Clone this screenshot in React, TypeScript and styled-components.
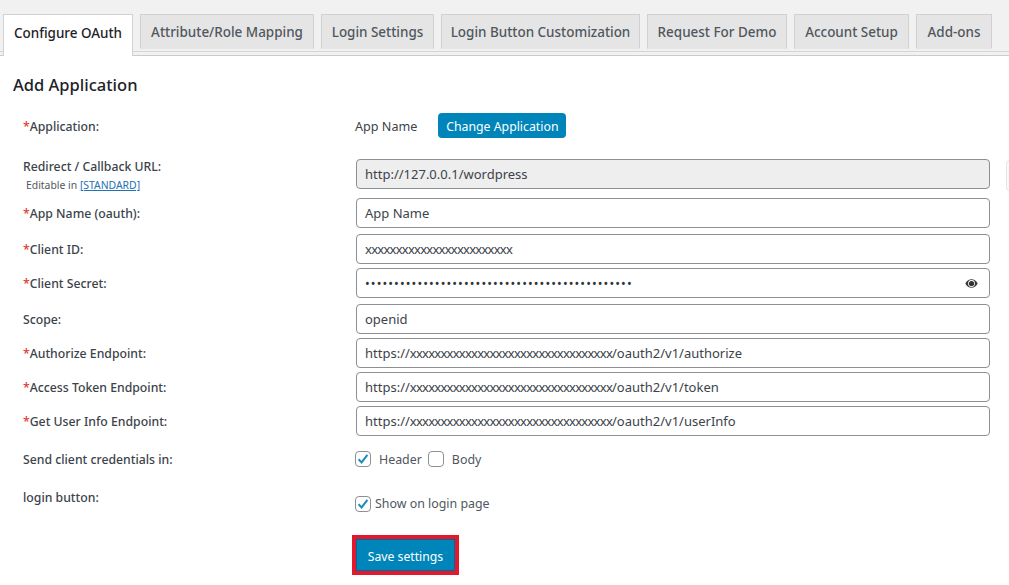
import React from "react";
import styled, { createGlobalStyle } from "styled-components";

const Global = createGlobalStyle`
  html, body { margin: 0; padding: 0; background: #fff; overflow: hidden; }
  body { font-family: "Noto Sans", "Open Sans", sans-serif; color: #3c434a; }
`;
const Page = styled.div`
  width: 1009px;
  height: 585px;
  overflow: hidden;
  position: relative;
`;
const TabBar = styled.nav`
  height: 56px;
  box-sizing: border-box;
  padding: 14px 0 0 3px;
  background: #f1f1f1;
  border-bottom: 1px solid #c9cbcd;
  display: flex;
  align-items: flex-start;
  gap: 7px;
  position: relative;
  &::after {
    content: "";
    position: absolute;
    left: 0;
    right: 0;
    top: 51px;
    height: 1px;
    background: #d4d5d6;
  }
`;
const Tab = styled.a<{ $active?: boolean; $w: number }>`
  width: ${(p) => p.$w}px;
  height: ${(p) => (p.$active ? 42 : 35)}px;
  box-sizing: border-box;
  display: flex;
  align-items: center;
  justify-content: center;
  padding-bottom: ${(p) => (p.$active ? 6 : 0)}px;
  font-size: 13.45px;
  font-weight: 500;
  white-space: nowrap;
  color: ${(p) => (p.$active ? "#1d2327" : "#50575e")};
  background: ${(p) => (p.$active ? "#fff" : "#e5e5e5")};
  border: 1px solid #d0d1d2;
  border-bottom: ${(p) => (p.$active ? "none" : "1px solid #e5e5e5")};
  position: relative;
  z-index: 1;
`;
const Title = styled.h2`
  margin: 0;
  padding: 17px 0 0 13px;
  height: 41px;
  box-sizing: border-box;
  font-size: 16.5px;
  line-height: 24px;
  font-weight: 500;
  color: #1d2327;
`;
const Form = styled.div`
  padding: 0 19px 0 23px;
  display: flex;
  flex-direction: column;
`;
const Row = styled.div<{ $top: number; $h?: number; $start?: boolean }>`
  display: flex;
  align-items: ${(p) => (p.$start ? "flex-start" : "center")};
  margin-top: ${(p) => p.$top}px;
  height: ${(p) => p.$h ?? 30}px;
`;
const LabelCol = styled.div`
  width: 333px;
  flex: none;
`;
const Label = styled.div<{ $lift?: number }>`
  font-size: 12.25px;
  line-height: 16px;
  padding-top: 2px;
  margin-top: ${(p) => -(p.$lift ?? 0)}px;
  font-weight: 500;
  color: #3c434a;
`;
const Star = styled.span`
  color: #e2352f;
`;
const Hint = styled.div`
  font-size: 10.4px;
  line-height: 13px;
  margin: 4px 0 0 3px;
  color: #50575e;
`;
const HintLink = styled.a`
  color: #2271b1;
  text-decoration: underline;
`;
const Field = styled.div<{ $disabled?: boolean }>`
  flex: 1;
  height: 30px;
  box-sizing: border-box;
  border: 1px solid #8c8f94;
  border-radius: 4px;
  background: ${(p) => (p.$disabled ? "#eeeeee" : "#fff")};
  padding: 0 11px 0 8px;
  display: flex;
  align-items: center;
  justify-content: space-between;
  font-size: 13px;
  color: #3c434a;
  white-space: nowrap;
`;
const Xs = styled.span`
  letter-spacing: -0.75px;
`;
const Dots = styled.span`
  font-size: 12.5px;
  letter-spacing: 1.12px;
  color: #2c3338;
`;
const AppName = styled.span`
  font-size: 12.6px;
  margin-left: -1px;
  margin-right: 21px;
`;
const Change = styled.button`
  height: 25px;
  width: 128px;
  margin-bottom: 1px;
  padding: 2px 0 0;
  border: none;
  border-radius: 4px;
  background: #0085ba;
  color: #fff;
  font: 12.3px "Noto Sans", sans-serif;
`;
const Box = styled.span`
  width: 16px;
  height: 16px;
  flex: none;
  box-sizing: border-box;
  border: 1px solid #8c8f94;
  border-radius: 4px;
  background: #fff;
  display: inline-flex;
  align-items: center;
  justify-content: center;
`;
const Options = styled.div<{ $top?: number }>`
  display: flex;
  align-items: center;
  margin: ${(p) => p.$top ?? 0}px 0 0 -1px;
  font-size: 12.4px;
  color: #50575e;
`;
const OptionText = styled.span<{ $ml: number; $mr?: number }>`
  margin-left: ${(p) => p.$ml}px;
  margin-right: ${(p) => p.$mr ?? 0}px;
`;
const SaveOutline = styled.div`
  margin: 11px 0 0 329px;
  width: 107px;
  height: 40px;
  box-sizing: border-box;
  border: 4px solid #e2192c;
  display: flex;
`;
const Save = styled.button`
  flex: 1;
  border: 1px solid #006799;
  background: #0085ba;
  color: #fff;
  padding: 2px 0 0;
  font: 12.2px "Noto Sans", sans-serif;
`;
const Edge = styled.div`
  position: absolute;
  left: 1006px;
  top: 160px;
  width: 6px;
  height: 29px;
  border: 1px solid #e6e6e6;
  border-radius: 3px;
  background: #fafafa;
`;

const Check = () => (
  <svg width="14" height="14" viewBox="0 0 14 14">
    <path d="M2.6 7.2 L5.6 10.4 L11.4 2.8" fill="none" stroke="#1e8cbe" strokeWidth="2" />
  </svg>
);
const Eye = () => (
  <svg width="13" height="9" viewBox="0 0 13 9">
    <path d="M0.3 4.5C2 1.6 4 .3 6.5 .3s4.5 1.3 6.2 4.2C11 7.4 9 8.7 6.5 8.7S2 7.4.3 4.5z" fill="#3a3a3a" />
    <circle cx="6.5" cy="4.5" r="3.4" fill="#fff" />
    <circle cx="6.5" cy="4.5" r="2.6" fill="#333" />
  </svg>
);

const tabs: [string, number][] = [
  ["Attribute/Role Mapping", 174],
  ["Login Settings", 113],
  ["Login Button Customization", 199],
  ["Request For Demo", 140],
  ["Account Setup", 115],
  ["Add-ons", 76],
];
const X = "x".repeat(33);

const Req = ({ children }: { children: React.ReactNode }) => (
  <Label>
    <Star>*</Star>
    {children}
  </Label>
);

export default function App() {
  return (
    <Page>
      <Global />
      <TabBar>
        <Tab $active $w={130}>Configure OAuth</Tab>
        {tabs.map(([t, w]) => (
          <Tab key={t} $w={w}>{t}</Tab>
        ))}
      </TabBar>
      <Title>Add Application</Title>
      <Form>
        <Row $top={14}>
          <LabelCol><Req>Application:</Req></LabelCol>
          <AppName>App Name</AppName>
          <Change>Change Application</Change>
        </Row>
        <Row $top={18} $start>
          <LabelCol>
            <Label $lift={2}>Redirect / Callback URL:</Label>
            <Hint>Editable in <HintLink>[STANDARD]</HintLink></Hint>
          </LabelCol>
          <Field $disabled>http://127.0.0.1/wordpress</Field>
        </Row>
        <Row $top={9}><LabelCol><Req>App Name (oauth):</Req></LabelCol><Field>App Name</Field></Row>
        <Row $top={6}><LabelCol><Req>Client ID:</Req></LabelCol><Field><Xs>{"x".repeat(24)}</Xs></Field></Row>
        <Row $top={4}>
          <LabelCol><Req>Client Secret:</Req></LabelCol>
          <Field><Dots>{"•".repeat(46)}</Dots><Eye /></Field>
        </Row>
        <Row $top={6}><LabelCol><Label>Scope:</Label></LabelCol><Field>openid</Field></Row>
        <Row $top={4}><LabelCol><Req>Authorize Endpoint:</Req></LabelCol><Field><span>https://<Xs>{X}</Xs>/oauth2/v1/authorize</span></Field></Row>
        <Row $top={4}><LabelCol><Req>Access Token Endpoint:</Req></LabelCol><Field><span>https://<Xs>{X}</Xs>/oauth2/v1/token</span></Field></Row>
        <Row $top={4}><LabelCol><Req>Get User Info Endpoint:</Req></LabelCol><Field><span>https://<Xs>{X}</Xs>/oauth2/v1/userInfo</span></Field></Row>
        <Row $top={8}>
          <LabelCol><Label>Send client credentials in:</Label></LabelCol>
          <Options>
            <Box><Check /></Box>
            <OptionText $ml={8} $mr={6}>Header</OptionText>
            <Box />
            <OptionText $ml={8}>Body</OptionText>
          </Options>
        </Row>
        <Row $top={15} $h={35} $start>
          <LabelCol><Label $lift={1}>login button:</Label></LabelCol>
          <Options $top={6}>
            <Box><Check /></Box>
            <OptionText $ml={4}>Show on login page</OptionText>
          </Options>
        </Row>
        <SaveOutline><Save>Save settings</Save></SaveOutline>
      </Form>
      <Edge />
    </Page>
  );
}
